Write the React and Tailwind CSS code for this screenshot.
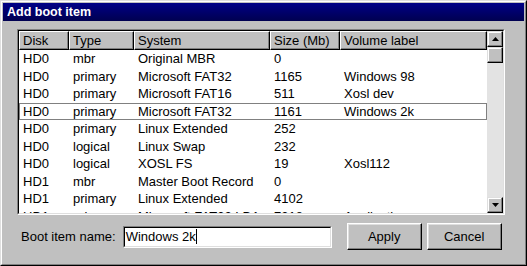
import React from "react";

const cols = [50, 65, 136, 70, 147];
const headers = ["Disk", "Type", "System", "Size (Mb)", "Volume label"];
const rows = [
  ["HD0", "mbr", "Original MBR", "0", ""],
  ["HD0", "primary", "Microsoft FAT32", "1165", "Windows 98"],
  ["HD0", "primary", "Microsoft FAT16", "511", "Xosl dev"],
  ["HD0", "primary", "Microsoft FAT32", "1161", "Windows 2k"],
  ["HD0", "primary", "Linux Extended", "252", ""],
  ["HD0", "logical", "Linux Swap", "232", ""],
  ["HD0", "logical", "XOSL FS", "19", "Xosl112"],
  ["HD1", "mbr", "Master Boot Record", "0", ""],
  ["HD1", "primary", "Linux Extended", "4102", ""],
  ["HD1", "primary", "Microsoft FAT32 LBA", "7318", "Application"],
];

function ArrowBtn({ up }) {
  return (
    <div className="w-[16px] h-[16px] bg-[#c0c0c0] border border-t-[#dfdfdf] border-l-[#dfdfdf] border-r-black border-b-black shadow-[inset_-1px_-1px_0_#808080,inset_1px_1px_0_#ffffff] flex items-center justify-center shrink-0">
      <svg width="7" height="4" viewBox="0 0 7 4">
        {up ? <path d="M3.5 0 L7 4 L0 4 Z" fill="#000" /> : <path d="M0 0 L7 0 L3.5 4 Z" fill="#000" />}
      </svg>
    </div>
  );
}

export default function App() {
  return (
    <div className="w-[527px] h-[266px] font-['Liberation_Sans',Arial,sans-serif] text-[13px] text-black">
      <div className="w-full h-full border border-t-[#dfdfdf] border-l-[#dfdfdf] border-r-black border-b-black">
        <div className="w-full h-full border border-t-white border-l-white border-r-[#808080] border-b-[#808080] bg-[#c0c0c0] p-px flex flex-col">
          <div className="h-[18px] bg-gradient-to-b from-[#000088] to-[#000050] flex items-center pl-[4px]">
            <span className="text-white font-bold text-[12.5px] leading-none">Add boot item</span>
          </div>
          <div className="pl-[14px] pt-[8px] flex flex-col">
            <div className="w-[488px] h-[186px] border border-t-[#808080] border-l-[#808080] border-r-white border-b-white">
              <div className="w-full h-full border border-t-black border-l-black border-r-[#dfdfdf] border-b-[#dfdfdf] flex">
                <div className="w-[468px] h-full bg-white flex flex-col overflow-hidden">
                  <div className="flex h-[19px] shrink-0">
                    {headers.map((h, i) => (
                      <div
                        key={h}
                        style={{ width: cols[i] }}
                        className="h-full bg-[#c0c0c0] border border-t-white border-l-white border-r-black border-b-black shadow-[inset_-1px_-1px_0_#808080] flex items-center pl-[3px] shrink-0 leading-none"
                      >
                        {h}
                      </div>
                    ))}
                  </div>
                  {rows.map((r, ri) => (
                    <div
                      key={ri}
                      className={
                        "flex h-[17.5px] shrink-0 items-center " +
                        (ri === 3 ? "shadow-[inset_0_0_0_1px_#808080]" : "")
                      }
                    >
                      {r.map((c, ci) => (
                        <div key={ci} style={{ width: cols[ci] }} className="pl-[4px] shrink-0 leading-none whitespace-nowrap">
                          {c}
                        </div>
                      ))}
                    </div>
                  ))}
                </div>
                <div className="w-[16px] h-full bg-[#e3e3e3] flex flex-col">
                  <ArrowBtn up />
                  <div className="w-[16px] h-[16px] bg-[#c0c0c0] border border-t-[#dfdfdf] border-l-[#dfdfdf] border-r-black border-b-black shadow-[inset_-1px_-1px_0_#808080,inset_1px_1px_0_#ffffff] shrink-0" />
                  <div className="flex-1" />
                  <ArrowBtn />
                </div>
              </div>
            </div>
            <div className="flex items-center mt-[8px] h-[27px] pl-[4px]">
              <span className="leading-none">Boot item name:</span>
              <div className="ml-[7px] w-[209px] h-[22px] border border-t-[#808080] border-l-[#808080] border-r-white border-b-white">
                <div className="w-full h-full border border-t-black border-l-black border-r-[#dfdfdf] border-b-[#dfdfdf] bg-white flex items-center pl-[1px]">
                  <span className="leading-none">Windows 2k</span>
                  <span className="w-px h-[15px] bg-black" />
                </div>
              </div>
              <button className="ml-[15px] w-[75px] h-[27px] bg-[#c0c0c0] border border-t-white border-l-white border-r-black border-b-black shadow-[inset_-1px_-1px_0_#808080,inset_1px_1px_0_#dfdfdf] flex items-center justify-center leading-none">
                Apply
              </button>
              <button className="ml-[5px] w-[75px] h-[27px] bg-[#c0c0c0] border border-t-white border-l-white border-r-black border-b-black shadow-[inset_-1px_-1px_0_#808080,inset_1px_1px_0_#dfdfdf] flex items-center justify-center leading-none">
                Cancel
              </button>
            </div>
          </div>
        </div>
      </div>
    </div>
  );
}
